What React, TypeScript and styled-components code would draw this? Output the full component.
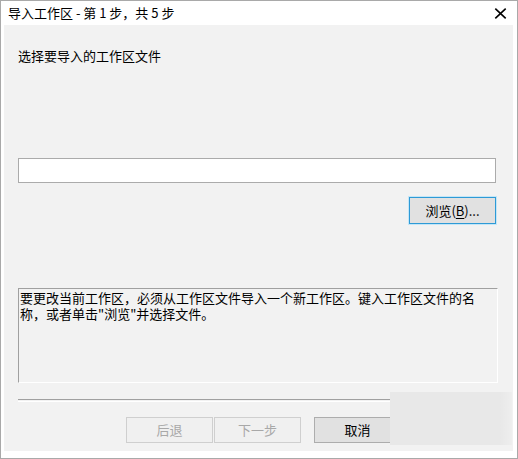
import React from "react";
import styled, { createGlobalStyle } from "styled-components";

const GlobalStyle = createGlobalStyle`
  html, body {
    margin: 0;
    padding: 0;
    background: #ffffff;
  }
  body {
    font-family: "Noto Sans CJK SC", "Noto Sans", sans-serif;
    color: #000;
  }
`;

const Window = styled.div`
  position: relative;
  width: 518px;
  height: 459px;
  box-sizing: border-box;
  border: 1px solid #a9a9a9;
  background: #ffffff;
  display: flex;
  flex-direction: column;
  overflow: hidden;
`;

const TitleBar = styled.div`
  height: 24px;
  flex: none;
  display: flex;
  align-items: center;
  justify-content: space-between;
  padding: 0 10px 0 7px;
  font-size: 13px;
  line-height: 16px;
`;

const CloseButton = styled.div`
  width: 14px;
  height: 12px;
  display: flex;
  align-items: center;
  justify-content: center;
`;

const Body = styled.div`
  flex: 1;
  margin: 0 4px 7px 3px;
  padding: 23px 17px 0 14px;
  background: #f2f2f2;
  display: flex;
  flex-direction: column;
  font-size: 13px;
  line-height: 16px;
`;

const Label = styled.div`
  height: 16px;
`;

const PathInput = styled.div`
  margin-top: 94px;
  height: 25px;
  box-sizing: border-box;
  border: 1px solid #ababab;
  background: #ffffff;
`;

const BrowseRow = styled.div`
  margin-top: 14px;
  display: flex;
  justify-content: flex-end;
`;

const Button = styled.div<{ $variant?: "focus" | "normal" | "disabled" }>`
  width: 87px;
  height: 26px;
  box-sizing: border-box;
  display: flex;
  align-items: center;
  justify-content: center;
  font-size: 13px;
  line-height: 16px;
  background: ${p => (p.$variant === "disabled" ? "#f0f0f0" : "#e1e1e1")};
  color: ${p => (p.$variant === "disabled" ? "#a8a8a8" : "#000")};
  border: 1px solid
    ${p =>
      p.$variant === "focus"
        ? "#2e9ad6"
        : p.$variant === "disabled"
        ? "#cfcfcf"
        : "#adadad"};
  box-shadow: ${p =>
    p.$variant === "focus" ? "0 0 0 1px #c4e6f7" : "none"};
  u {
    text-decoration: underline;
    text-underline-offset: 2px;
  }
`;

const BrowseButton = styled(Button)`
  height: 27px;
`;

const Description = styled.div`
  margin-top: 64px;
  margin-right: -2px;
  height: 95px;
  box-sizing: border-box;
  padding: 1px 0 0 1px;
  border-top: 1px solid #a0a0a0;
  border-left: 1px solid #a0a0a0;
  border-right: 1px solid #ffffff;
  border-bottom: 1px solid #ffffff;
  line-height: 15.5px;
`;

const Separator = styled.div`
  margin-top: 16px;
  margin-right: -2px;
  height: 1px;
  border-top: 1px solid #a0a0a0;
  border-bottom: 1px solid #ffffff;
`;

const ButtonRow = styled.div`
  margin-top: 15px;
  display: flex;
  padding-left: 108px;
  gap: 1px;
`;

const Spacer = styled.div`
  width: 11px;
`;

const Watermark = styled.div`
  position: absolute;
  left: 389px;
  top: 391px;
  width: 122px;
  height: 53px;
  background: linear-gradient(to right, #e8e8e8 0%, #e8e8e8 90%, #eeeeee 100%);
`;

export default function App() {
  return (
    <>
      <GlobalStyle />
      <Window>
        <TitleBar>
          <span>导入工作区 - 第 1 步，共 5 步</span>
          <CloseButton>
            <svg width="13" height="11" viewBox="0 0 13 11">
              <path
                d="M1.3 0.6 L11.7 10.4 M11.7 0.6 L1.3 10.4"
                stroke="#000"
                strokeWidth="1.6"
                fill="none"
              />
            </svg>
          </CloseButton>
        </TitleBar>
        <Body>
          <Label>选择要导入的工作区文件</Label>
          <PathInput />
          <BrowseRow>
            <BrowseButton $variant="focus">
              浏览(<u>B</u>)...
            </BrowseButton>
          </BrowseRow>
          <Description>
            要更改当前工作区，必须从工作区文件导入一个新工作区。键入工作区文件的名称，或者单击"浏览"并选择文件。
          </Description>
          <Separator />
          <ButtonRow>
            <Button $variant="disabled">后退</Button>
            <Button $variant="disabled">下一步</Button>
            <Spacer />
            <Button $variant="normal">取消</Button>
          </ButtonRow>
        </Body>
        <Watermark />
      </Window>
    </>
  );
}
